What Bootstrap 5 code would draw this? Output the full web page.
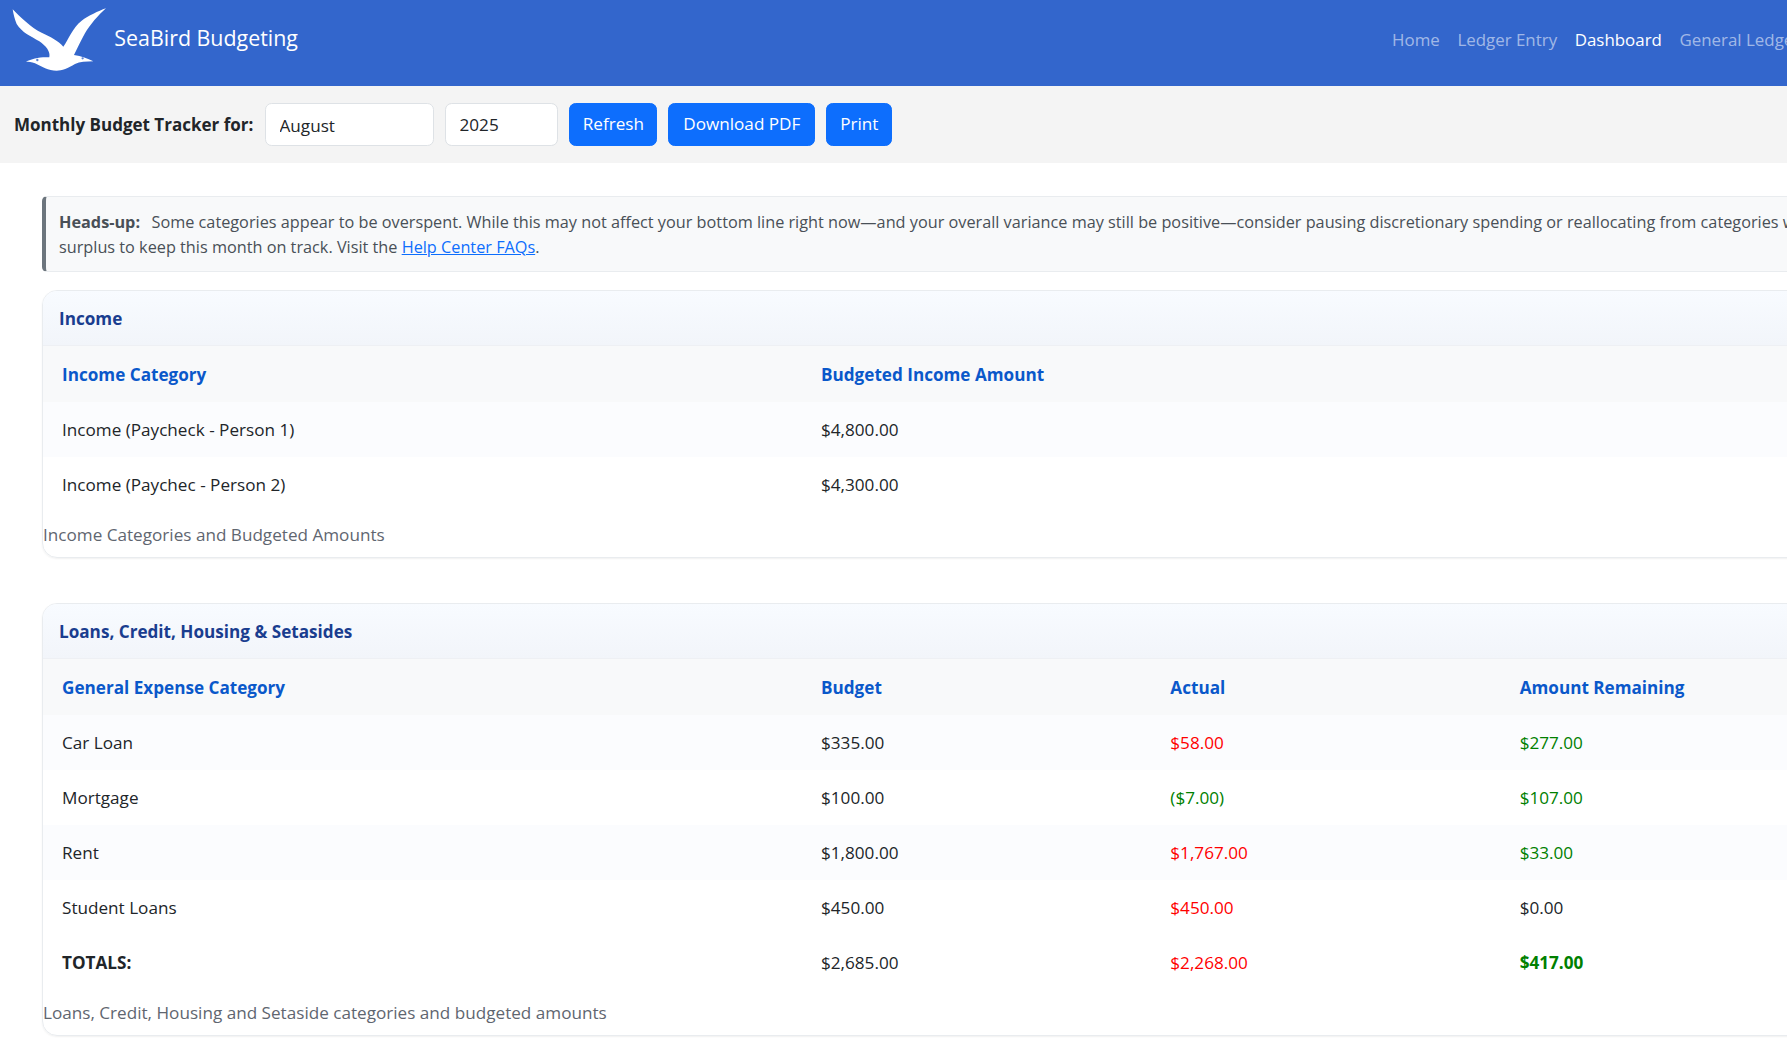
<!DOCTYPE html>
<html lang="en"><head><meta charset="utf-8"><title>SeaBird Budgeting</title>
<link href="https://cdn.jsdelivr.net/npm/bootstrap@5.3.0/dist/css/bootstrap.min.css" rel="stylesheet">
<style>
html{font-size:17.6px;overflow:hidden}
body{font-family:"Open Sans","Noto Sans",sans-serif;font-size:17.14px;line-height:26.4px;overflow:hidden;width:1787px;color:#212529}
.sheet{width:1896px}
.topbar{background:#3366cc;height:86px;padding:0}
.topbar .navbar-brand{font-size:21.4px;color:#fff;margin:0 0 0 10px;padding:0;display:flex;align-items:center;gap:6px;position:relative;top:-5px}
.topbar .nav-link{color:rgba(255,255,255,.55);padding:0 9px;font-size:16.9px}
.topbar .nav-link.active{color:#fff}
.menu-pad{margin-left:auto;position:relative;top:-3px;margin-right:8px}
.toolbar{background:#f4f4f4;height:77px;padding-left:14px;gap:11px}
.toolbar strong{font-size:17px;position:relative;top:1px;margin-right:1px}
.toolbar .form-select,.toolbar .form-control{background-image:none;font-size:17.14px;line-height:26.4px;height:42.4px}
.toolbar .form-select{padding-top:8px;padding-bottom:5px}
.toolbar .btn{--bs-btn-font-size:17.14px;--bs-btn-line-height:26.4px;--bs-btn-padding-x:0;height:42.4px}
.pick-month{width:169px}.pick-year{width:113px}
.btn-refresh{width:88px}.btn-pdf{width:147px}.btn-print{width:66px}
.hold{padding:33px 0 0 42px;width:1851px}
.note{background:#f8f9fa;border:1px solid #e9ecef;border-left:4px solid #6c757d;border-radius:5px;color:#495057;font-size:16.25px;line-height:24.5px;padding:13px 13px 10px;margin-bottom:18px;height:76px}
.note strong{margin-right:3px}
.panel{border:1px solid #e9ecef;border-radius:15px;overflow:hidden;margin-bottom:45px;box-shadow:0 1px 2px rgba(0,0,0,.06)}
.panel-head{background:linear-gradient(#f8fbff,#f2f5fa);font-weight:700;color:#1a3d8f;padding:15px 16px 13px;height:55px;border-bottom:1px solid #eef0f4}
.panel table{table-layout:fixed;width:100%;margin:0;caption-side:bottom}
.panel th{background:#f8f9fa;color:#0a58ca;font-weight:700;border:0;padding:15.8px 19px 13.8px}
.panel td{border:0;padding:14.8px 19px 13.8px;background:#fff;color:#212529}
.panel tbody tr:nth-child(odd) td{background:#fbfcfe}
.panel caption{color:#5f6670;padding:9.5px 0 9.3px 0}
.panel td.over{color:#f00}.panel td.under{color:#008000}
.colname{width:759px}
</style></head><body><div class="sheet">
<nav class="navbar topbar navbar-expand"><a class="navbar-brand" href="#"><svg width="98.3" height="66.7" viewBox="30 15 295 200"><path fill="#fff" d="M38 28C60 50 95 85 125 98C150 110 175 122 190 140C205 120 218 82 245 62C265 48 295 33 318 25C295 45 270 75 255 100C243 122 232 145 222 165C245 168 262 175 280 184C258 185 240 185 225 192C205 205 185 212 170 212C145 212 125 200 105 190C95 186 85 185 78 185C95 177 120 170 148 172C152 155 138 138 118 124C92 108 66 98 50 72C44 58 40 42 38 28Z"/><circle cx="112" cy="180" r="3.5" fill="#5b82d6"/><circle cx="248" cy="175" r="3.5" fill="#5b82d6"/></svg>SeaBird Budgeting</a>
<ul class="navbar-nav menu-pad"><li class="nav-item"><a class="nav-link" href="#">Home</a></li><li class="nav-item"><a class="nav-link" href="#">Ledger Entry</a></li><li class="nav-item"><a class="nav-link active" href="#">Dashboard</a></li><li class="nav-item"><a class="nav-link" href="#">General Ledger</a></li><li class="nav-item"><a class="nav-link" href="#">Reports</a></li></ul></nav>
<div class="toolbar d-flex align-items-center"><strong>Monthly Budget Tracker for:</strong><select class="form-select pick-month"><option>August</option></select><input class="form-control pick-year" value="2025"><button class="btn btn-primary btn-refresh">Refresh</button><button class="btn btn-primary btn-pdf">Download PDF</button><button class="btn btn-primary btn-print">Print</button></div>
<div class="hold">
<div class="note"><strong>Heads-up:</strong>&nbsp; Some categories appear to be overspent. While this may not affect your bottom line right now—and your overall variance may still be positive—consider pausing discretionary spending or reallocating from categories with a surplus to keep this month on track. Visit the <a href="#">Help Center FAQs</a>.</div>
<div class="panel"><div class="panel-head">Income</div><table class="table"><colgroup><col class="colname"><col></colgroup><caption>Income Categories and Budgeted Amounts</caption><thead><tr><th>Income Category</th><th>Budgeted Income Amount</th></tr></thead><tbody><tr><td>Income (Paycheck - Person 1)</td><td>$4,800.00</td></tr><tr><td>Income (Paychec - Person 2)</td><td>$4,300.00</td></tr></tbody></table></div>
<div class="panel"><div class="panel-head">Loans, Credit, Housing &amp; Setasides</div><table class="table"><colgroup><col class="colname"><col><col><col></colgroup><caption>Loans, Credit, Housing and Setaside categories and budgeted amounts</caption><thead><tr><th>General Expense Category</th><th>Budget</th><th>Actual</th><th>Amount Remaining</th></tr></thead><tbody>
<tr><td>Car Loan</td><td>$335.00</td><td class="over">$58.00</td><td class="under">$277.00</td></tr>
<tr><td>Mortgage</td><td>$100.00</td><td class="under">($7.00)</td><td class="under">$107.00</td></tr>
<tr><td>Rent</td><td>$1,800.00</td><td class="over">$1,767.00</td><td class="under">$33.00</td></tr>
<tr><td>Student Loans</td><td>$450.00</td><td class="over">$450.00</td><td>$0.00</td></tr>
</tbody><tfoot><tr><td><strong>TOTALS:</strong></td><td>$2,685.00</td><td class="over">$2,268.00</td><td class="under"><strong>$417.00</strong></td></tr></tfoot></table></div>
</div></div>
<script src="https://cdn.jsdelivr.net/npm/bootstrap@5.3.0/dist/js/bootstrap.bundle.min.js"></script>
</body></html>
